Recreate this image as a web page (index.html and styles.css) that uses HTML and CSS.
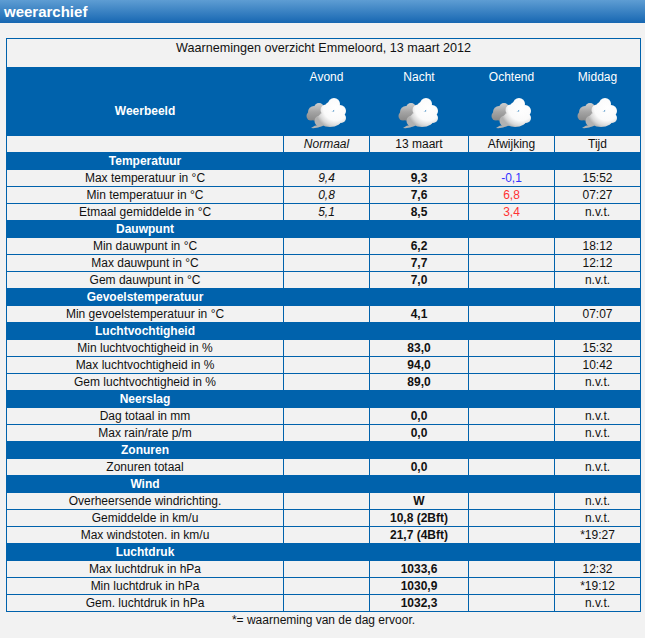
FILE: index.html
```html
<!DOCTYPE html>
<html lang="nl">
<head>
<meta charset="utf-8">
<title>weerarchief</title>
<link rel="stylesheet" href="styles.css">
</head>
<body>
<div class="titlebar">weerarchief</div>
<div class="content">
<table class="obs">
<colgroup><col class="c1"><col class="c2"><col class="c3"><col class="c4"><col class="c5"></colgroup>
<tr class="title"><td colspan="5">Waarnemingen overzicht Emmeloord, 13 maart 2012</td></tr>
<tr class="head labels"><td></td><td>Avond</td><td>Nacht</td><td>Ochtend</td><td>Middag</td></tr>
<tr class="head icons">
<td class="wb">Weerbeeld</td>
<td><svg class="cloud" width="44" height="34" viewBox="0 0 44 34">
<defs>
<linearGradient id="gback" gradientUnits="userSpaceOnUse" x1="0" y1="6" x2="0" y2="26"><stop offset="0" stop-color="#d0d0d0"/><stop offset="0.45" stop-color="#a4a4a4"/><stop offset="1" stop-color="#828282"/></linearGradient>
<radialGradient id="gfront" gradientUnits="userSpaceOnUse" cx="31" cy="11" r="21"><stop offset="0" stop-color="#ffffff"/><stop offset="0.6" stop-color="#fafafa"/><stop offset="0.84" stop-color="#d9d9d9"/><stop offset="1" stop-color="#b2b2b2"/></radialGradient>
<g id="cloudshape">
<g fill="url(#gback)">
<circle cx="9" cy="15" r="6"/><circle cx="14" cy="11" r="5"/><circle cx="6" cy="19" r="4.5"/><ellipse cx="12" cy="18" rx="9" ry="6"/>
</g>
<g fill="url(#gfront)">
<circle cx="29" cy="7" r="6"/><circle cx="25" cy="10" r="5"/><circle cx="35" cy="14" r="6"/><circle cx="36" cy="21" r="5"/><circle cx="21" cy="13" r="5.5"/><ellipse cx="25" cy="22" rx="12" ry="8"/><circle cx="15" cy="24" r="5.5"/>
<path d="M6 31 Q11 26.5 18 28.5 Q12 31.8 6 31Z"/>
</g>
</g>
</defs>
<use href="#cloudshape"/>
</svg></td>
<td><svg class="cloud" width="44" height="34" viewBox="0 0 44 34"><use href="#cloudshape"/></svg></td>
<td><svg class="cloud" width="44" height="34" viewBox="0 0 44 34"><use href="#cloudshape"/></svg></td>
<td><svg class="cloud" width="44" height="34" viewBox="0 0 44 34"><use href="#cloudshape"/></svg></td>
</tr>
<tr class="sub"><td></td><td class="it">Normaal</td><td>13 maart</td><td>Afwijking</td><td>Tijd</td></tr>

<tr class="sec"><td>Temperatuur</td><td colspan="4"></td></tr>
<tr><td>Max temperatuur in °C</td><td class="it">9,4</td><td class="b">9,3</td><td class="neg">-0,1</td><td>15:52</td></tr>
<tr><td>Min temperatuur in °C</td><td class="it">0,8</td><td class="b">7,6</td><td class="pos">6,8</td><td>07:27</td></tr>
<tr><td>Etmaal gemiddelde in °C</td><td class="it">5,1</td><td class="b">8,5</td><td class="pos">3,4</td><td>n.v.t.</td></tr>

<tr class="sec"><td>Dauwpunt</td><td colspan="4"></td></tr>
<tr><td>Min dauwpunt in °C</td><td></td><td class="b">6,2</td><td></td><td>18:12</td></tr>
<tr><td>Max dauwpunt in °C</td><td></td><td class="b">7,7</td><td></td><td>12:12</td></tr>
<tr><td>Gem dauwpunt in °C</td><td></td><td class="b">7,0</td><td></td><td>n.v.t.</td></tr>

<tr class="sec"><td>Gevoelstemperatuur</td><td colspan="4"></td></tr>
<tr><td>Min gevoelstemperatuur in °C</td><td></td><td class="b">4,1</td><td></td><td>07:07</td></tr>

<tr class="sec"><td>Luchtvochtigheid</td><td colspan="4"></td></tr>
<tr><td>Min luchtvochtigheid in %</td><td></td><td class="b">83,0</td><td></td><td>15:32</td></tr>
<tr><td>Max luchtvochtigheid in %</td><td></td><td class="b">94,0</td><td></td><td>10:42</td></tr>
<tr><td>Gem luchtvochtigheid in %</td><td></td><td class="b">89,0</td><td></td><td>n.v.t.</td></tr>

<tr class="sec"><td>Neerslag</td><td colspan="4"></td></tr>
<tr><td>Dag totaal in mm</td><td></td><td class="b">0,0</td><td></td><td>n.v.t.</td></tr>
<tr><td>Max rain/rate p/m</td><td></td><td class="b">0,0</td><td></td><td>n.v.t.</td></tr>

<tr class="sec"><td>Zonuren</td><td colspan="4"></td></tr>
<tr><td>Zonuren totaal</td><td></td><td class="b">0,0</td><td></td><td>n.v.t.</td></tr>

<tr class="sec"><td>Wind</td><td colspan="4"></td></tr>
<tr><td>Overheersende windrichting.</td><td></td><td class="b">W</td><td></td><td>n.v.t.</td></tr>
<tr><td>Gemiddelde in km/u</td><td></td><td class="b">10,8 (2Bft)</td><td></td><td>n.v.t.</td></tr>
<tr><td>Max windstoten. in km/u</td><td></td><td class="b">21,7 (4Bft)</td><td></td><td>*19:27</td></tr>

<tr class="sec"><td>Luchtdruk</td><td colspan="4"></td></tr>
<tr><td>Max luchtdruk in hPa</td><td></td><td class="b">1033,6</td><td></td><td>12:32</td></tr>
<tr><td>Min luchtdruk in hPa</td><td></td><td class="b">1030,9</td><td></td><td>*19:12</td></tr>
<tr><td>Gem. luchtdruk in hPa</td><td></td><td class="b">1032,3</td><td></td><td>n.v.t.</td></tr>
</table>
<p class="note">*= waarneming van de dag ervoor.</p>
</div>
</body>
</html>
```

FILE: styles.css
```css
body {
  margin: 0;
  background: #f2f2f2;
  font-family: "Liberation Sans", Arial, sans-serif;
  font-size: 12px;
  color: #111;
}

.titlebar {
  height: 23px;
  line-height: 23px;
  padding-left: 4px;
  color: #fff;
  font-weight: bold;
  font-size: 15px;
  background: linear-gradient(#5e9dd3, #1767b2);
}

.content {
  padding: 15px 0 0 6px;
}

.obs {
  border-collapse: separate;
  border-spacing: 0;
  table-layout: fixed;
  width: 635px;
  border-top: 1px solid #0062ac;
  border-left: 1px solid #0062ac;
}

.c1 { width: 277px; }
.c2 { width: 86px; }
.c3 { width: 99px; }
.c4 { width: 86px; }
.c5 { width: 86px; }

.obs td {
  padding: 0;
  border-right: 1px solid #0062ac;
  border-bottom: 1px solid #0062ac;
  text-align: center;
  line-height: 16px;
  background: #f2f2f2;
  white-space: nowrap;
  overflow: hidden;
}

.title td {
  padding: 1px 0 11px;
  font-size: 12.6px;
}

.head td {
  background: #0062ac;
  color: #fff;
}

.labels td {
  padding-top: 1px;
}

.icons td {
  vertical-align: top;
}

.icons td.wb {
  vertical-align: middle;
  font-weight: bold;
}

.cloud {
  display: block;
  margin: 11px auto 4px;
}

.sec td {
  background: #0062ac;
  color: #fff;
  font-weight: bold;
}

.it { font-style: italic; }
.b { font-weight: bold; }
.neg { color: #3333ff; }
.pos { color: #ff3333; }

.note {
  margin: 0;
  width: 635px;
  text-align: center;
  line-height: 16px;
}
```
